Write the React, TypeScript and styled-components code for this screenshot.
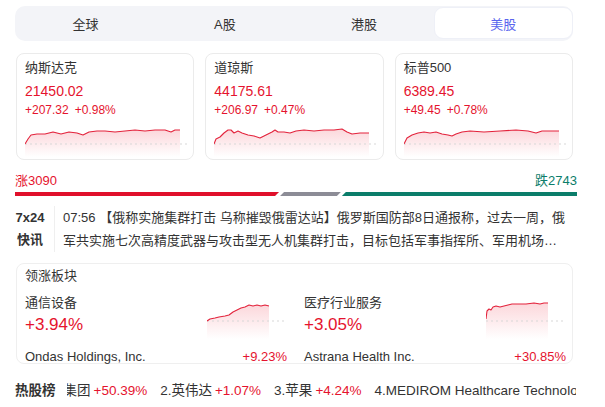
import React from "react";
import styled, { createGlobalStyle } from "styled-components";

const RED = "#e5132e";
const GREEN = "#0b7d6a";
const TEXT = "#333";

const GlobalStyle = createGlobalStyle`
  * { box-sizing: border-box; }
  body {
    margin: 0;
    background: #fff;
    font-family: "Liberation Sans", "Noto Sans CJK SC", sans-serif;
    color: ${TEXT};
  }
`;

const Page = styled.div`
  width: 605px;
  height: 407px;
  overflow: hidden;
  padding: 6px 32px 0 15px;
`;

// Market tabs
const Tabs = styled.div`
  display: flex;
  height: 35px;
  padding: 1px 0 2px 1px;
  background: #f3f4f8;
  border-radius: 10px;
`;

const Tab = styled.div<{ $active?: boolean }>`
  flex: 1;
  display: flex;
  align-items: center;
  justify-content: center;
  font-size: 13px;
  border-radius: 9px;
  color: ${({ $active }) => ($active ? "#5a66ee" : TEXT)};
  background: ${({ $active }) => ($active ? "#fff" : "transparent")};
  border: 1px solid ${({ $active }) => ($active ? "#eef0f7" : "transparent")};
`;

// Index cards
const Cards = styled.div`
  display: grid;
  grid-template-columns: repeat(3, 1fr);
  gap: 11px;
  margin: 12px 0 0 1px;
`;

const Card = styled.div`
  height: 107px;
  border: 1px solid #ebebeb;
  border-radius: 8px;
  padding: 4px 8px 0;
  overflow: hidden;
`;

const CardName = styled.div`
  font-size: 13px;
  line-height: 20px;
  color: ${TEXT};
`;

const Price = styled.div`
  font-size: 14px;
  line-height: 20px;
  margin-top: 3px;
  color: ${RED};
`;

const Change = styled.div`
  display: flex;
  gap: 6px;
  font-size: 12px;
  line-height: 18px;
  color: ${RED};
`;

const ChartBox = styled.div<{ $top: number }>`
  margin-top: ${({ $top }) => $top}px;
  line-height: 0;
`;

type Pt = [number, number];

const Sparkline = ({ pts, w, h, base }: { pts: Pt[]; w: number; h: number; base: number }) => {
  const id = React.useId().replace(/:/g, "");
  const line = pts.map((p, i) => `${i ? "L" : "M"}${p[0]},${p[1]}`).join(" ");
  const last = pts[pts.length - 1][0];
  const area = `${line} L${last},${h} L0,${h} Z`;
  return (
    <svg width={w} height={h} viewBox={`0 0 ${w} ${h}`}>
      <defs>
        <linearGradient id={id} x1="0" y1="0" x2="0" y2="1">
          <stop offset="0" stopColor="#f04a5c" stopOpacity="0.22" />
          <stop offset="1" stopColor="#f04a5c" stopOpacity="0" />
        </linearGradient>
      </defs>
      <path d={area} fill={`url(#${id})`} />
      <line x1="0" y1={base} x2={w} y2={base} stroke="#d8d8d8" strokeWidth="1.2" strokeDasharray="2 3" />
      <path d={line} fill="none" stroke="#e3233c" strokeWidth="1.1" strokeLinejoin="round" />
    </svg>
  );
};

// Advancers / decliners
const BreadthLabels = styled.div`
  display: flex;
  justify-content: space-between;
  margin-top: 12px;
  font-size: 13px;
  line-height: 18px;
  width: 562px;
`;

const Label = styled.span<{ $color: string }>`
  color: ${({ $color }) => $color};
`;

const BreadthBar = styled.div`
  display: flex;
  height: 4px;
  margin-top: 2px;
  width: 562px;
`;

const Segment = styled.div<{ $color: string; $grow: number; $first?: boolean; $last?: boolean }>`
  flex: ${({ $grow }) => $grow};
  background: ${({ $color }) => $color};
  clip-path: polygon(
    ${({ $first }) => ($first ? "0 0" : "4px 0")},
    100% 0,
    ${({ $last }) => ($last ? "100% 100%" : "calc(100% - 4px) 100%")},
    0 100%
  );
  & + & {
    margin-left: 1px;
  }
`;

// 7x24 news
const News = styled.div`
  display: flex;
  margin-top: 10px;
`;

const NewsTag = styled.div`
  width: 40px;
  padding: 1px 9px 0 0;
  font-size: 13px;
  font-weight: 700;
  line-height: 22px;
  text-align: center;
  border-right: 1px solid #efefef;
  flex-shrink: 0;
`;

const NewsText = styled.div`
  flex: 1;
  padding-left: 8px;
  font-size: 13px;
  line-height: 23px;
  color: ${TEXT};
  display: -webkit-box;
  -webkit-line-clamp: 2;
  -webkit-box-orient: vertical;
  overflow: hidden;
  max-width: 514px;
`;

// Leading sectors
const SectorCard = styled.div`
  margin: 11px 0 0 1px;
  border: 1px solid #efefef;
  border-radius: 8px;
  padding: 3px 6px 0 8px;
  height: 101px;
`;

const SectorTitle = styled.div`
  font-size: 13px;
  line-height: 18px;
`;

const SectorGrid = styled.div`
  display: grid;
  grid-template-columns: 1fr 1fr;
  column-gap: 17px;
  margin-top: 9px;
`;

const SectorTop = styled.div`
  display: flex;
  justify-content: space-between;
  padding-right: 2px;
`;

const SectorName = styled.div`
  font-size: 13px;
  line-height: 18px;
`;

const SectorPct = styled.div`
  font-size: 17px;
  line-height: 22px;
  margin-top: 2px;
  color: ${RED};
`;

const SectorChart = styled.div`
  margin-top: 5px;
  line-height: 0;
`;

const LeaderRow = styled.div`
  display: flex;
  justify-content: space-between;
  font-size: 13px;
  line-height: 18px;
  margin-top: 9px;
`;

// Hot stocks ticker
const HotRow = styled.div`
  display: flex;
  align-items: center;
  margin-top: 18px;
  font-size: 13.5px;
  line-height: 18px;
  width: 561px;
`;

const HotTitle = styled.div`
  font-weight: 700;
  flex-shrink: 0;
  margin-right: 11px;
`;

const Ticker = styled.div`
  flex: 1;
  overflow: hidden;
  white-space: nowrap;
`;

const TickerTrack = styled.div`
  display: inline-flex;
  gap: 13px;
  margin-left: -3px;
`;

const HotItem = styled.span`
  color: ${TEXT};
`;

const HotPct = styled.span`
  color: ${RED};
  margin-left: 3px;
`;

const indices: { name: string; price: string; chg: string; pct: string; pts: Pt[] }[] = [
  {
    name: "纳斯达克",
    price: "21450.02",
    chg: "+207.32",
    pct: "+0.98%",
    pts: [[0, 19], [3, 14], [6, 10], [12, 9], [20, 9], [28, 7], [36, 9], [44, 7], [52, 8], [58, 10], [64, 7], [72, 6], [80, 6], [90, 7], [100, 6], [110, 5], [120, 6], [130, 5], [140, 5], [146, 7], [150, 5], [155, 5]],
  },
  {
    name: "道琼斯",
    price: "44175.61",
    chg: "+206.97",
    pct: "+0.47%",
    pts: [[0, 19], [2, 14], [6, 12], [10, 8], [14, 5], [17, 5], [20, 8], [24, 6], [28, 8], [34, 10], [40, 11], [46, 13], [52, 10], [58, 7], [61, 5], [64, 7], [70, 7], [76, 8], [82, 6], [90, 5], [100, 6], [110, 5], [120, 5], [128, 4], [133, 7], [138, 9], [146, 8], [155, 8]],
  },
  {
    name: "标普500",
    price: "6389.45",
    chg: "+49.45",
    pct: "+0.78%",
    pts: [[0, 19], [3, 13], [8, 10], [14, 8], [20, 7], [26, 8], [32, 7], [38, 9], [44, 10], [48, 11], [52, 9], [58, 7], [66, 6], [80, 7], [96, 6], [112, 5], [124, 6], [132, 8], [138, 6], [155, 6]],
  },
];

const sectors: { name: string; pct: string; leader: string; leaderPct: string; pts: Pt[] }[] = [
  {
    name: "通信设备",
    pct: "+3.94%",
    leader: "Ondas Holdings, Inc.",
    leaderPct: "+9.23%",
    pts: [[0, 22], [3, 20], [8, 19], [12, 18], [18, 17], [22, 16], [26, 13], [30, 11], [34, 9], [38, 8], [42, 6], [46, 7], [50, 6], [54, 7], [58, 6], [62, 7]],
  },
  {
    name: "医疗行业服务",
    pct: "+3.05%",
    leader: "Astrana Health Inc.",
    leaderPct: "+30.85%",
    pts: [[0, 20], [1, 12], [3, 10], [5, 11], [7, 8], [10, 7], [14, 8], [18, 7], [22, 6], [26, 5], [32, 5], [40, 5], [48, 4], [54, 5], [58, 4], [62, 4]],
  },
];

const hot = [
  { name: "集团", pct: "+50.39%" },
  { name: "2.英伟达", pct: "+1.07%" },
  { name: "3.苹果", pct: "+4.24%" },
  { name: "4.MEDIROM Healthcare Technologies", pct: "+12.10%" },
];

export default function App() {
  return (
    <Page>
      <GlobalStyle />
      <Tabs>
        <Tab>全球</Tab>
        <Tab>A股</Tab>
        <Tab>港股</Tab>
        <Tab $active>美股</Tab>
      </Tabs>

      <Cards>
        {indices.map((c) => (
          <Card key={c.name}>
            <CardName>{c.name}</CardName>
            <Price>{c.price}</Price>
            <Change>
              <span>{c.chg}</span>
              <span>{c.pct}</span>
            </Change>
            <ChartBox $top={6}>
              <Sparkline pts={c.pts} w={162} h={32} base={19} />
            </ChartBox>
          </Card>
        ))}
      </Cards>

      <BreadthLabels>
        <Label $color={RED}>涨3090</Label>
        <Label $color={GREEN}>跌2743</Label>
      </BreadthLabels>
      <BreadthBar>
        <Segment $color="#e0102b" $grow={265} $first />
        <Segment $color="#8c8c96" $grow={61} />
        <Segment $color={GREEN} $grow={236} $last />
      </BreadthBar>

      <News>
        <NewsTag>
          7x24
          <br />
          快讯
        </NewsTag>
        <NewsText>
          07:56 【俄称实施集群打击 乌称摧毁俄雷达站】俄罗斯国防部8日通报称，过去一周，俄军共实施七次高精度武器与攻击型无人机集群打击，目标包括军事指挥所、军用机场、无人机仓库及乌克兰武装部队临时部署点等。
        </NewsText>
      </News>

      <SectorCard>
        <SectorTitle>领涨板块</SectorTitle>
        <SectorGrid>
          {sectors.map((s) => (
            <div key={s.name}>
              <SectorTop>
                <div>
                  <SectorName>{s.name}</SectorName>
                  <SectorPct>{s.pct}</SectorPct>
                </div>
                <SectorChart>
                  <Sparkline pts={s.pts} w={78} h={40} base={22} />
                </SectorChart>
              </SectorTop>
              <LeaderRow>
                <span>{s.leader}</span>
                <Label $color={RED}>{s.leaderPct}</Label>
              </LeaderRow>
            </div>
          ))}
        </SectorGrid>
      </SectorCard>

      <HotRow>
        <HotTitle>热股榜</HotTitle>
        <Ticker>
          <TickerTrack>
            {hot.map((h) => (
              <HotItem key={h.name}>
                {h.name}
                <HotPct>{h.pct}</HotPct>
              </HotItem>
            ))}
          </TickerTrack>
        </Ticker>
      </HotRow>
    </Page>
  );
}
